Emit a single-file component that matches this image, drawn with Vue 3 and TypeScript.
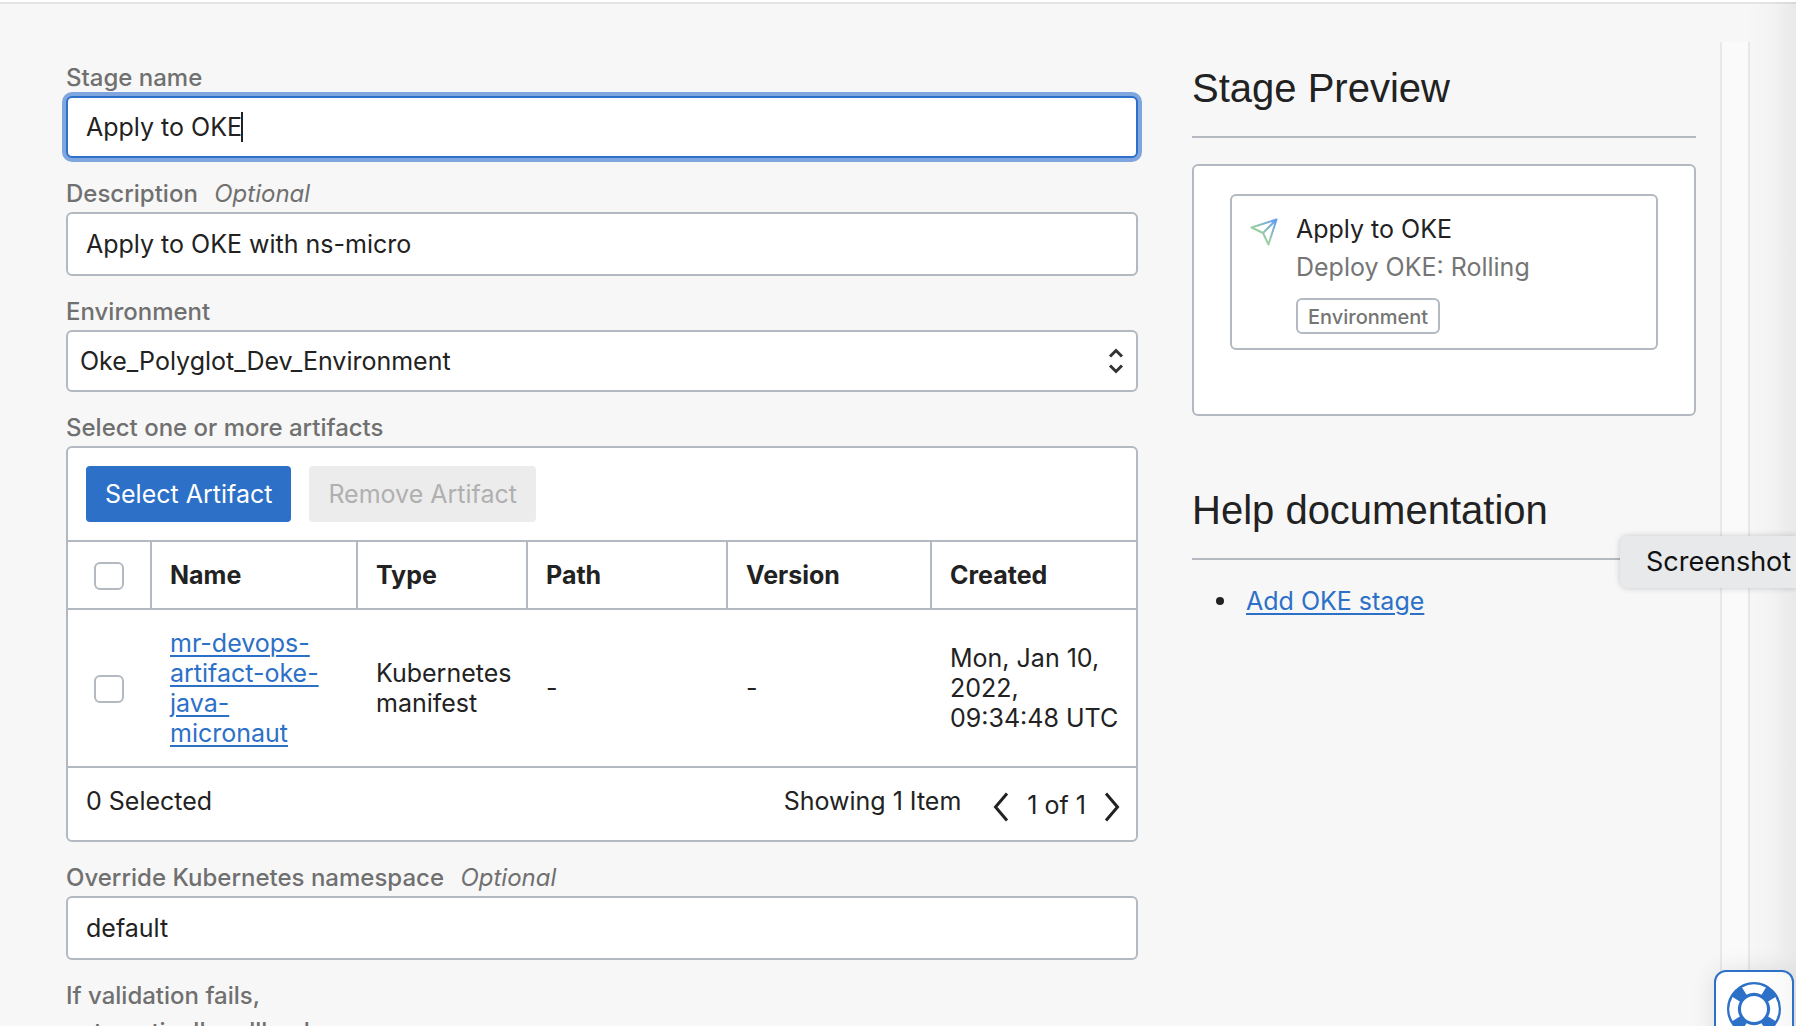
<script setup lang="ts">
import { ref } from 'vue'

interface Artifact {
  name: string
  type: string
  path: string
  version: string
  created: string
}

const stageName = ref('Apply to OKE')
const description = ref('Apply to OKE with ns-micro')
const environment = ref('Oke_Polyglot_Dev_Environment')
const namespace = ref('default')

const columns: string[] = ['Name', 'Type', 'Path', 'Version', 'Created']
const artifacts: Artifact[] = [
  {
    name: 'mr-devops-artifact-oke-java-micronaut',
    type: 'Kubernetes manifest',
    path: '-',
    version: '-',
    created: 'Mon, Jan 10, 2022, 09:34:48 UTC',
  },
]
</script>

<template>
  <div class="page">
    <main class="content">
      <form class="form" @submit.prevent>
        <div class="field">
          <label class="label" for="stage-name">Stage name</label>
          <div class="control">
            <input id="stage-name" v-model="stageName" class="input input-active" type="text" />
            <span class="caret" aria-hidden="true"></span>
          </div>
        </div>

        <div class="field">
          <label class="label" for="description">Description <em>Optional</em></label>
          <input id="description" v-model="description" class="input" type="text" />
        </div>

        <div class="field">
          <label class="label" for="environment">Environment</label>
          <div class="control">
            <select id="environment" v-model="environment" class="select">
              <option>Oke_Polyglot_Dev_Environment</option>
            </select>
            <svg class="select-arrows" viewBox="0 0 16 26" aria-hidden="true">
              <path d="M2 8.5 8 2.5l6 6M2 17.5l6 6 6-6" />
            </svg>
          </div>
        </div>

        <div class="field">
          <span id="artifacts-label" class="label">Select one or more artifacts</span>
          <section class="panel" aria-labelledby="artifacts-label">
            <div class="toolbar">
              <button class="btn btn-primary" type="button">Select Artifact</button>
              <button class="btn" type="button" disabled>Remove Artifact</button>
            </div>
            <table class="table">
              <colgroup>
                <col class="col-check" />
                <col class="col-name" />
                <col class="col-type" />
                <col class="col-path" />
                <col class="col-version" />
                <col />
              </colgroup>
              <thead>
                <tr>
                  <th class="check-cell"><input class="check" type="checkbox" aria-label="Select all artifacts" /></th>
                  <th v-for="c in columns" :key="c" scope="col">{{ c }}</th>
                </tr>
              </thead>
              <tbody>
                <tr v-for="a in artifacts" :key="a.name">
                  <td class="check-cell"><input class="check" type="checkbox" :aria-label="a.name" /></td>
                  <td class="name-cell"><a class="link" href="#">{{ a.name }}</a></td>
                  <td>{{ a.type }}</td>
                  <td>{{ a.path }}</td>
                  <td>{{ a.version }}</td>
                  <td>{{ a.created }}</td>
                </tr>
              </tbody>
            </table>
            <div class="footer">
              <span class="selected">0 Selected</span>
              <span class="showing">Showing 1 Item</span>
              <div class="pager">
                <button class="page-btn" type="button" aria-label="Previous page">
                  <svg viewBox="0 0 16 30"><path d="M14 1.5 2.5 15 14 28.5" /></svg>
                </button>
                <span>1 of 1</span>
                <button class="page-btn" type="button" aria-label="Next page">
                  <svg viewBox="0 0 16 30"><path d="M2 1.5 13.5 15 2 28.5" /></svg>
                </button>
              </div>
            </div>
          </section>
        </div>

        <div class="field">
          <label class="label" for="namespace">Override Kubernetes namespace <em>Optional</em></label>
          <input id="namespace" v-model="namespace" class="input" type="text" />
        </div>

        <div class="field">
          <span class="label label-narrow">If validation fails, automatically rollback</span>
        </div>
      </form>

      <aside class="side">
        <section>
          <h2 class="heading">Stage Preview</h2>
          <div class="preview">
            <div class="card">
              <svg class="plane" viewBox="0 0 28 28" aria-hidden="true">
                <defs>
                  <linearGradient id="plane-fill" gradientUnits="userSpaceOnUse" x1="8" y1="22" x2="27" y2="1">
                    <stop offset="0.2" stop-color="#9ccf9f" />
                    <stop offset="0.9" stop-color="#649fee" />
                  </linearGradient>
                </defs>
                <path d="M26.5 1.5 1.5 9.5l11.5 5.5 5.5 11.5zM26.5 1.5 13 15" />
              </svg>
              <div class="card-text">
                <div>Apply to OKE</div>
                <div class="muted">Deploy OKE: Rolling</div>
                <span class="tag">Environment</span>
              </div>
            </div>
          </div>
        </section>
        <section class="help">
          <h2 class="heading">Help documentation</h2>
          <ul class="links">
            <li><a class="link" href="#">Add OKE stage</a></li>
          </ul>
        </section>
      </aside>
    </main>

    <div class="scroll-track" aria-hidden="true"></div>
    <div class="edge-shade" aria-hidden="true"></div>
    <div class="tooltip" role="tooltip">Screenshot</div>
    <button class="support" type="button" aria-label="Support">
      <svg viewBox="0 0 54 54" aria-hidden="true">
        <circle cx="27" cy="27" r="20" fill="none" stroke="#2d70c8" stroke-width="14" />
        <g fill="#fff">
          <path
            v-for="turn in [0, 90, 180, 270]"
            :key="turn"
            :transform="`rotate(${turn} 27 27)`"
            d="M15 5.6a24.5 24.5 0 0 1 24 0l-4.5 7.2a16 16 0 0 0-15 0z"
          />
        </g>
      </svg>
    </button>
  </div>
</template>

<style>
body {
  margin: 0;
  overflow: hidden;
}
</style>

<style scoped>
.page {
  position: relative;
  box-sizing: border-box;
  height: 100vh;
  overflow: hidden;
  border-top: 2px solid #fff;
  background: #f7f7f7;
  color: #222;
  font: 25px/30px Inter, 'Liberation Sans', sans-serif;
}
.page *,
.page *::before {
  box-sizing: border-box;
}
.content {
  display: grid;
  grid-template-columns: minmax(0, 1072fr) minmax(0, 504fr);
  gap: 54px;
  padding: 56px 100px 0 66px;
  border-top: 2px solid #e5e5e5;
}
.form {
  display: flex;
  flex-direction: column;
  gap: 18px;
}
.field {
  display: flex;
  flex-direction: column;
}
.label {
  padding: 3px 0;
  color: #707070;
  font-size: 24px;
  font-weight: 500;
}
.label em {
  margin-left: 10px;
  font-weight: 400;
}
.label-narrow {
  max-width: 290px;
  padding: 0;
  line-height: 36px;
}
.control {
  position: relative;
  display: flex;
}
.input,
.select {
  width: 100%;
  height: 64px;
  margin: 0;
  padding: 0 18px;
  border: 2px solid #b3b9c1;
  border-radius: 6px;
  outline: none;
  background: #fff;
  color: #222;
  font: inherit;
}
.input-active {
  height: 62px;
  border-color: #2d70c8;
  box-shadow: 0 0 0 4px #80a6df;
}
.caret {
  position: absolute;
  top: 16px;
  left: 175px;
  width: 2px;
  height: 30px;
  background: #222;
}
.select {
  height: 62px;
  padding: 0 12px;
  appearance: none;
}
.select-arrows {
  position: absolute;
  top: 18px;
  right: 14px;
  width: 16px;
  height: 26px;
  fill: none;
  stroke: #333;
  stroke-width: 3;
  pointer-events: none;
}
.panel {
  border: 2px solid #b3b9c1;
  border-radius: 6px;
  background: #fff;
}
.toolbar {
  display: flex;
  gap: 18px;
  padding: 18px;
}
.btn {
  height: 56px;
  padding: 0 19px;
  border: 0;
  border-radius: 4px;
  background: #ececec;
  color: #b0b0b0;
  font: inherit;
}
.btn-primary {
  background: #2d70c8;
  color: #fff;
}
.table {
  width: 100%;
  table-layout: fixed;
  border-collapse: separate;
  border-spacing: 0;
}
.col-check {
  width: 84px;
}
.col-name {
  width: 206px;
}
.col-type {
  width: 170px;
}
.col-path {
  width: 200px;
}
.col-version {
  width: 204px;
}
th {
  height: 70px;
  padding: 0 18px;
  border-top: 2px solid #b3b9c1;
  border-right: 2px solid #b3b9c1;
  border-bottom: 2px solid #b3b9c1;
  font-weight: 700;
  text-align: left;
}
th:last-child {
  border-right: 0;
}
td {
  padding: 18px 14px 18px 18px;
  border-bottom: 2px solid #b3b9c1;
  vertical-align: middle;
}
.name-cell {
  padding-right: 36px;
}
.check-cell {
  padding: 2px 0 0 26px;
}
.check {
  display: block;
  width: 30px;
  height: 28px;
  margin: 0;
  border: 2px solid #b3b9c1;
  border-radius: 6px;
  background: #fff;
  appearance: none;
}
.link {
  color: #2d70c8;
  text-decoration: underline;
  text-decoration-thickness: 2px;
  text-underline-offset: 3px;
}
.footer {
  display: flex;
  align-items: flex-start;
  height: 72px;
  padding: 18px 16px 0 18px;
}
.selected {
  flex: 1;
}
.showing {
  margin-right: 32px;
}
.pager {
  display: flex;
  gap: 18px;
  padding-top: 4px;
}
.page-btn {
  display: flex;
  width: 16px;
  height: 34px;
  padding: 2px 0 0;
  border: 0;
  background: none;
}
.page-btn svg {
  width: 16px;
  height: 30px;
  fill: none;
  stroke: #222;
  stroke-width: 3;
}
.heading {
  height: 78px;
  margin: 0;
  padding-top: 4px;
  border-bottom: 2px solid #b3b9bf;
  font: 400 40px/48px 'Liberation Sans', Arial, sans-serif;
}
.preview {
  height: 252px;
  margin-top: 26px;
  padding: 28px 36px;
  border: 2px solid #b3b9c1;
  border-radius: 6px;
  background: #fff;
}
.card {
  display: flex;
  gap: 18px;
  height: 156px;
  padding: 14px 18px;
  border: 2px solid #b3b9c1;
  border-radius: 6px;
}
.plane {
  flex: none;
  width: 28px;
  height: 28px;
  margin-top: 8px;
  fill: none;
  stroke: url(#plane-fill);
  stroke-width: 2;
  stroke-linejoin: round;
}
.card-text {
  line-height: 38px;
}
.muted {
  color: #757575;
}
.tag {
  display: block;
  width: max-content;
  height: 36px;
  margin-top: 12px;
  padding: 0 10px;
  border: 2px solid #b3b9c1;
  border-radius: 6px;
  color: #757575;
  font-size: 20px;
  font-weight: 500;
  line-height: 34px;
}
.help {
  margin-top: 66px;
}
.links {
  margin: 26px 0 0;
  padding: 0;
  list-style: none;
}
.links li {
  display: flex;
  align-items: center;
  gap: 22px;
  padding-left: 24px;
}
.links li::before {
  width: 8px;
  height: 8px;
  border-radius: 50%;
  background: #222;
  content: '';
}
.scroll-track {
  position: absolute;
  top: 40px;
  right: 46px;
  bottom: 0;
  width: 30px;
  border-right: 2px solid #e8e8e8;
  border-left: 2px solid #e8e8e8;
  background: #fafafa;
}
.edge-shade {
  position: absolute;
  top: 0;
  right: 0;
  bottom: 0;
  width: 50px;
  background: linear-gradient(to right, rgba(0, 0, 0, 0), rgba(0, 0, 0, 0.015) 50%, rgba(0, 0, 0, 0.06));
}
.tooltip {
  position: absolute;
  top: 534px;
  right: 0;
  width: 176px;
  height: 52px;
  padding-left: 26px;
  border-radius: 8px 0 0 8px;
  background: #e7e9eb;
  box-shadow: 0 0 6px rgba(0, 0, 0, 0.2);
  color: #111;
  font-size: 27px;
  line-height: 52px;
  white-space: nowrap;
}
.support {
  position: absolute;
  right: 2px;
  bottom: -24px;
  display: flex;
  justify-content: center;
  width: 80px;
  height: 80px;
  padding: 10px 0 0;
  border: 2px solid #2d70c8;
  border-radius: 12px;
  background: linear-gradient(to right, #fff 60%, #f7f7f7);
  box-shadow: 0 0 24px rgba(0, 0, 0, 0.1);
}
.support svg {
  width: 54px;
  height: 54px;
}
</style>
